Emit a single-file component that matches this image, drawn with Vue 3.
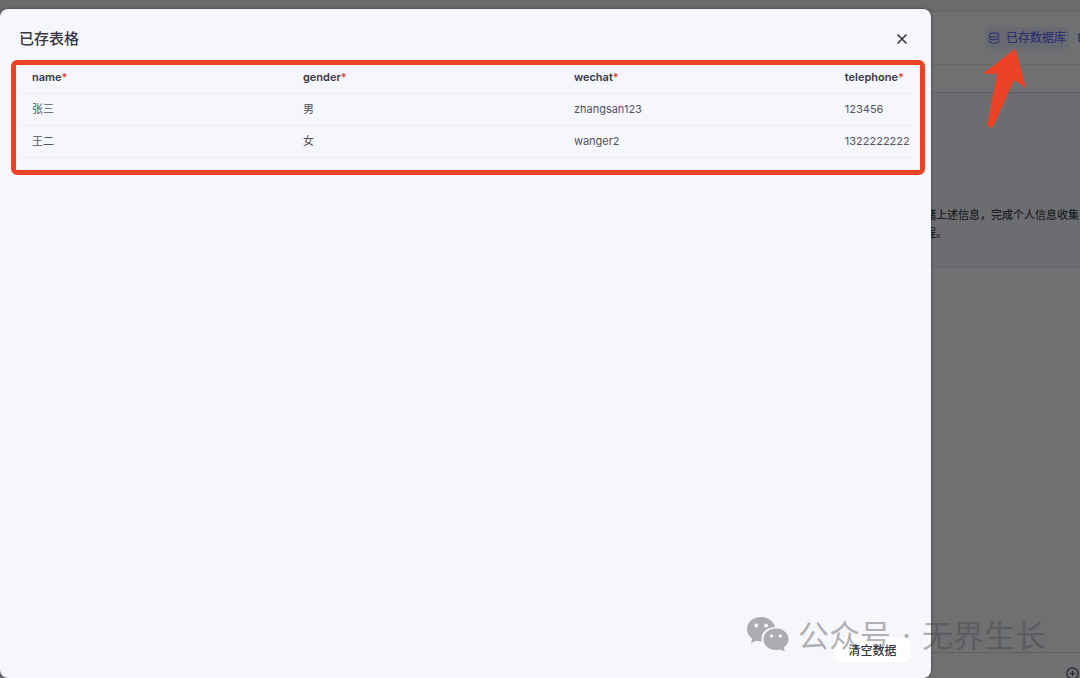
<script setup>
const columns = ['name', 'gender', 'wechat', 'telephone']
const rows = [
  ['张三', '男', 'zhangsan123', '123456'],
  ['王二', '女', 'wanger2', '1322222222'],
]
</script>

<template>
  <div class="app">
    <main class="page">
      <div class="strip"></div>
      <header class="toolbar">
        <button class="db-btn" type="button">
          <svg width="12" height="12" viewBox="0 0 12 12" fill="none" stroke="currentColor" stroke-width="1.2" stroke-linecap="round">
            <ellipse cx="6" cy="2.900" rx="4.800" ry="2.100" />
            <path d="M1 5.800C2 8.400 10 8.400 11 5.800M1 8.900C2 12 10 12 11 8.900" />
          </svg>
          <span>已存数据库</span>
        </button>
        <svg class="next-icon" width="2" height="10" viewBox="0 0 2 10" fill="none" stroke="currentColor" stroke-width="1.4"><path d="M2 1Q0.500 1 0.700 3T2 6.500M1.300 7v2" /></svg>
      </header>
      <div class="subbar"></div>
      <section class="chat">
        <p>储上述信息，完成个人信息收集<br />程。</p>
      </section>
      <div class="space"></div>
      <footer class="composer">
        <svg width="13" height="13" viewBox="0 0 13 13" fill="none" stroke="currentColor" stroke-width="1.2">
          <circle cx="6.500" cy="6.500" r="5.600" />
          <path d="M6.500 3.800v5.400M3.800 6.500h5.400" />
        </svg>
      </footer>
    </main>

    <section class="modal" role="dialog" aria-labelledby="title">
      <header class="modal-head">
        <h1 id="title">已存表格</h1>
        <button class="close" type="button" aria-label="关闭">
          <svg width="12" height="12" viewBox="0 0 12 12" fill="none" stroke="currentColor" stroke-width="1.7" stroke-linecap="round"><path d="M2 2l8 8M10 2l-8 8" /></svg>
        </button>
      </header>
      <div class="table-frame">
        <div class="table-scroll">
          <table>
            <thead>
              <tr><th v-for="c in columns" :key="c" scope="col">{{ c }}<i>*</i></th></tr>
            </thead>
            <tbody>
              <tr v-for="row in rows" :key="row[0]"><td v-for="cell in row" :key="cell">{{ cell }}</td></tr>
            </tbody>
          </table>
        </div>
      </div>
      <footer class="modal-foot"><button class="clear" type="button">清空数据</button></footer>
    </section>

    <svg class="arrow" width="44" height="80" viewBox="0 0 44 80"><path d="M32.500 0.500L43 40L31 32L11 77Q9 81 6 79Q4 78 4.500 75L14 26L0 25.500Z" fill="#ec4226" /></svg>

    <div class="watermark">
      <svg width="44" height="36" viewBox="0 0 44 36">
        <path fill="currentColor" fill-rule="evenodd" d="M15 1C7 1 1 6.500 1 13.300c0 4 2 7.200 5.200 9.500L5 27.300l5.200-2.600c1.700.5 3.600.8 5.600.8-2-8 4.500-14.500 13.500-14.300C27.500 5.300 22 1 15 1ZM10.300 7.500a2 2 0 1 1 0 4 2 2 0 0 1 0-4Zm9.700 0a2 2 0 1 1 0 4 2 2 0 0 1 0-4Z" />
        <path fill="currentColor" fill-rule="evenodd" d="M30 12.500c-7.200 0-12.500 4.800-12.500 10.700S22.800 34 30 34c1.500 0 2.900-.2 4.200-.6l4.600 2-1.100-3.900c2.900-2 4.800-5 4.800-8.300 0-5.900-5.300-10.700-12.500-10.700Zm-4.500 5.700a1.700 1.700 0 1 1 0 3.400 1.700 1.700 0 0 1 0-3.400Zm8.700 0a1.700 1.700 0 1 1 0 3.400 1.700 1.700 0 0 1 0-3.400Z" />
      </svg>
      <div class="brand"><span>公众号</span><span>·</span><span>无界生长</span></div>
    </div>
  </div>
</template>

<style>
body { background: #6c6d70; }
</style>

<style scoped>
* { box-sizing: border-box; }
.app {
  position: relative;
  height: 100vh;
  overflow: hidden;
  font-family: Inter, "Noto Sans CJK SC", sans-serif;
  color: #383942;
}
button { border: 0; padding: 0; background: none; font: inherit; color: inherit; }
.page { height: 100%; display: flex; flex-direction: column; background: #6f7072; }
.strip { height: 12px; background: #6a6b6d; border-bottom: 1px solid #646568; }
.toolbar {
  height: 53px;
  display: flex;
  justify-content: flex-end;
  align-items: center;
  gap: 9px;
  border-bottom: 1px solid #66676a;
  color: #2f3270;
}
.db-btn {
  display: flex;
  align-items: center;
  gap: 6px;
  height: 22px;
  padding: 0 3px;
  border-radius: 4px;
  background: #696a71;
  font-size: 12px;
  line-height: 16px;
  font-weight: 500;
}
.subbar { height: 28px; border-bottom: 1px solid #606164; }
.chat { height: 175px; background: #6c6d70; border-bottom: 1px solid #646568; padding-top: 113px; }
.chat p {
  width: 155px;
  margin: 0 0 0 auto;
  white-space: nowrap;
  font-size: 11px;
  line-height: 18px;
  font-weight: 500;
  color: #1d1e22;
}
.space { flex: 1; background: #6f7072; }
.composer {
  height: 26px;
  display: flex;
  justify-content: flex-end;
  padding: 14px 1px 0 0;
  border-top: 1px solid #606164;
  color: #24252b;
}
.modal {
  position: absolute;
  inset: 9px 149px 0 0;
  display: flex;
  flex-direction: column;
  border-radius: 8px;
  background: #f6f7fb;
  box-shadow: 0 0 3px rgba(0, 0, 0, 0.5);
}
.modal-head {
  display: flex;
  align-items: center;
  justify-content: space-between;
  height: 51px;
  padding: 8px 19px 0 19px;
}
h1 { margin: 0; font-size: 15px; line-height: 24px; font-weight: 500; }
.close { display: flex; align-items: center; justify-content: center; width: 20px; height: 20px; }
.table-frame {
  margin: 0 6px 0 11px;
  height: 115px;
  padding: 0 8px 0 4px;
  border: 5px solid #ec4226;
  border-radius: 6px;
}
.table-scroll { overflow: hidden; }
table { width: 121.5%; table-layout: fixed; border-collapse: separate; border-spacing: 0; font-size: 11px; line-height: 16px; }
th, td { height: 32px; padding: 0 12px; text-align: left; border-bottom: 1px solid #ebecf1; }
td { padding-bottom: 2px; color: #53545c; }
th { height: 29px; padding-bottom: 4px; font-weight: 600; }
th i { color: #ed4033; font-style: normal; }
.modal-foot { display: flex; justify-content: flex-end; margin-top: auto; padding: 0 20px 16px; }
.clear {
  width: 77px;
  height: 24px;
  padding-bottom: 2px;
  border-radius: 6px;
  background: #fff;
  font-size: 12px;
  font-weight: 500;
}
.arrow { position: absolute; top: 48px; right: 53px; }
.watermark {
  position: absolute;
  right: 34px;
  bottom: 20px;
  display: flex;
  align-items: center;
  gap: 8px;
  color: rgba(60, 60, 64, 0.4);
  font-size: 31px;
  line-height: 44px;
  white-space: nowrap;
}
.watermark svg { margin-bottom: 5px; }
.brand { display: flex; gap: 11px; }
</style>
